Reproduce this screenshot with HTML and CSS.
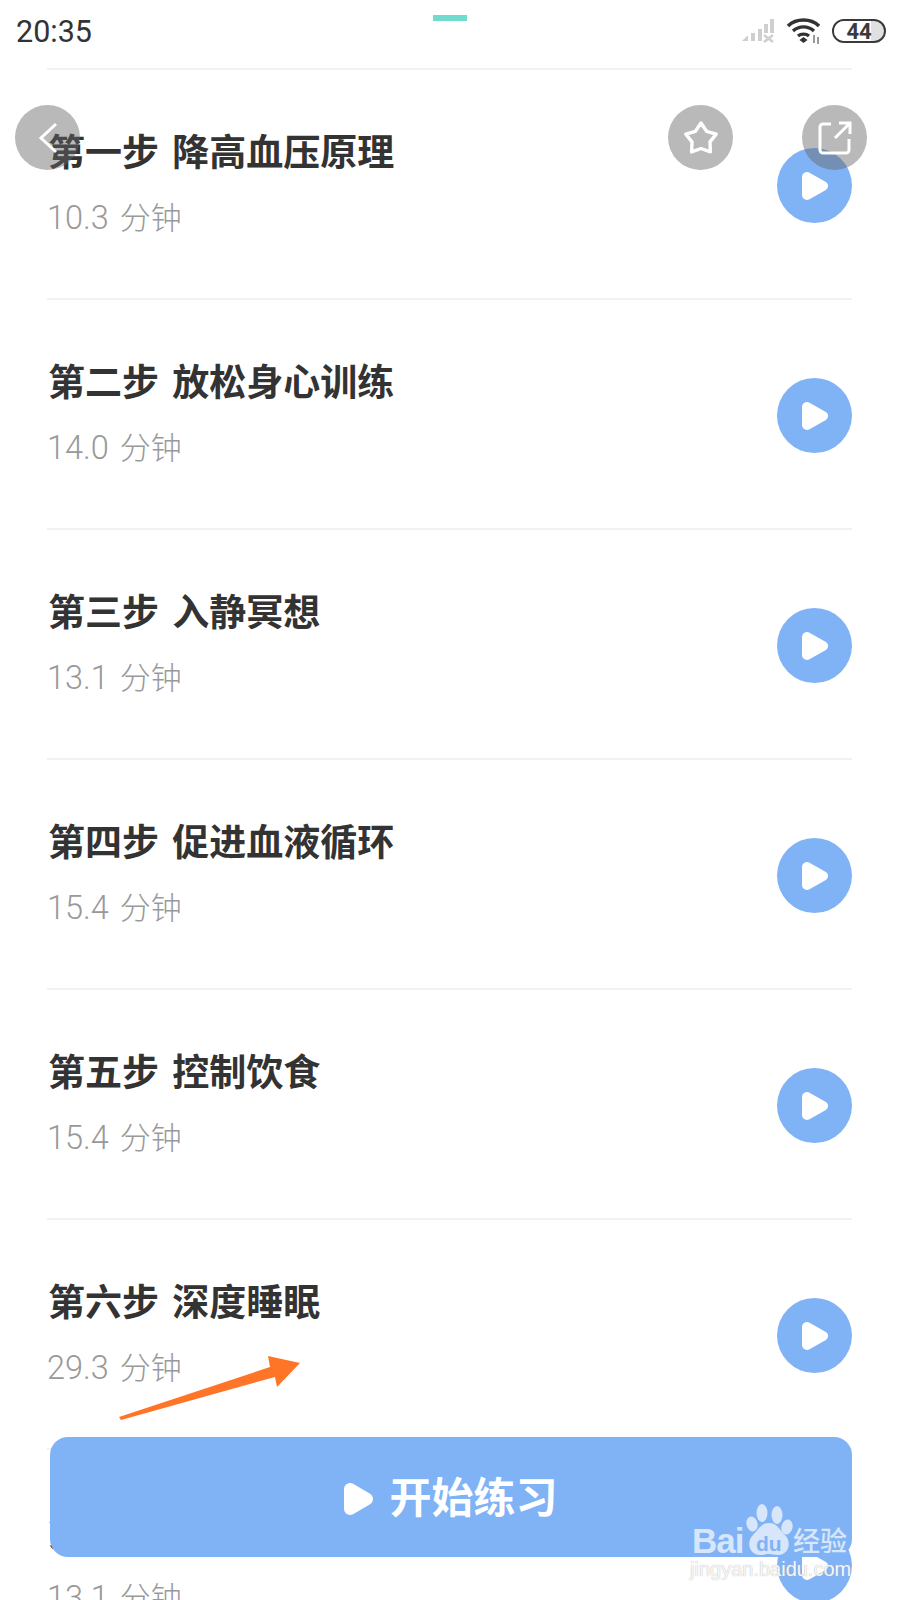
FILE: index.html
```html
<!DOCTYPE html>
<html lang="zh-CN">
<head>
    <meta charset="UTF-8">
    <title>降高血压</title>
    <link rel="stylesheet" href="styles.css">
</head>
<body>
<section class="wrap">
    <div class="statusBar">
        <span class="time">20:35</span>
        <span class="notch"></span>
        <div class="statusIcons">
            <svg class="signal" width="32" height="24" viewBox="0 0 32 24">
                <path d="M0 22l5-5h1v5zM9 14h4v8H9zM16 10h4v12h-4zM22 5h4v9h-4zM28 0h4v14h-4z" fill="#cfcfcf"/>
                <path d="M22 16l9 7M31 16l-9 7" stroke="#cfcfcf" stroke-width="2.500"/>
            </svg>
            <svg class="wifi" width="33" height="26" viewBox="0 0 33 26">
                <path d="M1 8C9 0 24 0 32 8M6 13c6-5.500 15-5.500 21 0M11 18c3-2.500 8-2.500 11 0" fill="none" stroke="#333" stroke-width="3.400"/>
                <path d="M16.500 19l4 3-4 3-4-3z" fill="#333"/>
                <path d="M27 17v8M31 19v7" stroke="#999" stroke-width="2"/>
            </svg>
            <div class="battery"><span class="batteryFill"></span><span class="batteryText">44</span></div>
        </div>
    </div>

    <ul class="steps">
        <li class="step">
            <div><h3>第一步 降高血压原理</h3><p>10.3 <span>分钟</span></p></div>
            <span class="playBtn"><svg width="26" height="28" viewBox="0 0 26 28"><path d="M5 5v18l16-9z" fill="#fff" stroke="#fff" stroke-width="10" stroke-linejoin="round"/></svg></span>
        </li>
        <li class="step">
            <div><h3>第二步 放松身心训练</h3><p>14.0 <span>分钟</span></p></div>
            <span class="playBtn"><svg width="26" height="28" viewBox="0 0 26 28"><path d="M5 5v18l16-9z" fill="#fff" stroke="#fff" stroke-width="10" stroke-linejoin="round"/></svg></span>
        </li>
        <li class="step">
            <div><h3>第三步 入静冥想</h3><p>13.1 <span>分钟</span></p></div>
            <span class="playBtn"><svg width="26" height="28" viewBox="0 0 26 28"><path d="M5 5v18l16-9z" fill="#fff" stroke="#fff" stroke-width="10" stroke-linejoin="round"/></svg></span>
        </li>
        <li class="step">
            <div><h3>第四步 促进血液循环</h3><p>15.4 <span>分钟</span></p></div>
            <span class="playBtn"><svg width="26" height="28" viewBox="0 0 26 28"><path d="M5 5v18l16-9z" fill="#fff" stroke="#fff" stroke-width="10" stroke-linejoin="round"/></svg></span>
        </li>
        <li class="step">
            <div><h3>第五步 控制饮食</h3><p>15.4 <span>分钟</span></p></div>
            <span class="playBtn"><svg width="26" height="28" viewBox="0 0 26 28"><path d="M5 5v18l16-9z" fill="#fff" stroke="#fff" stroke-width="10" stroke-linejoin="round"/></svg></span>
        </li>
        <li class="step">
            <div><h3>第六步 深度睡眠</h3><p>29.3 <span>分钟</span></p></div>
            <span class="playBtn"><svg width="26" height="28" viewBox="0 0 26 28"><path d="M5 5v18l16-9z" fill="#fff" stroke="#fff" stroke-width="10" stroke-linejoin="round"/></svg></span>
        </li>
        <li class="step">
            <div><h3>第七步 放松睡眠</h3><p>13.1 <span>分钟</span></p></div>
            <span class="playBtn"><svg width="26" height="28" viewBox="0 0 26 28"><path d="M5 5v18l16-9z" fill="#fff" stroke="#fff" stroke-width="10" stroke-linejoin="round"/></svg></span>
        </li>
    </ul>

    <!-- floating buttons over the list -->
    <span class="roundBtn backBtn">
        <svg width="20" height="32" viewBox="0 0 20 32"><path d="M18 2L3 16l15 14" fill="none" stroke="#fff" stroke-width="3"/></svg>
    </span>
    <span class="roundBtn starBtn">
        <svg width="36" height="36" viewBox="0 0 36 36"><path d="M18 3l5.600 8.300 9.600 2.800-6.200 7.800.4 10-9.400-3.400-9.400 3.400.4-10-6.200-7.800 9.600-2.800z" fill="none" stroke="#fff" stroke-width="3.400" stroke-linejoin="round"/></svg>
    </span>
    <span class="roundBtn shareBtn">
        <svg width="34" height="34" viewBox="0 0 34 34"><path d="M13 3H5a3 3 0 0 0-3 3v23a3 3 0 0 0 3 3h23a3 3 0 0 0 3-3V18M17 17L31 3M21 2h11v11" fill="none" stroke="#fff" stroke-width="3"/></svg>
    </span>

    <svg class="arrow" width="190" height="70" viewBox="0 0 190 70">
        <path d="M0 61L151 11 149 0l32 7-23 24-2-10L2 64z" fill="#ff7527"/>
    </svg>

    <button class="startBtn" type="button">
        <svg width="29" height="32" viewBox="0 0 29 32"><path d="M6 6v20l17-10z" fill="#fff" stroke="#fff" stroke-width="12" stroke-linejoin="round"/></svg>
        <span>开始练习</span>
    </button>

    <div class="watermark">
        <div class="wmLogo">
            <span class="wmBai">Bai</span>
            <svg class="wmPaw" width="48" height="53" viewBox="0 0 48 53">
                <ellipse cx="17" cy="10" rx="5.500" ry="9"/>
                <ellipse cx="32" cy="12" rx="5.500" ry="9"/>
                <ellipse cx="7" cy="21" rx="5.500" ry="7.500" transform="rotate(-15 7 21)"/>
                <ellipse cx="42" cy="24" rx="5.500" ry="7.500" transform="rotate(15 42 24)"/>
                <path d="M24 20c8 0 10 6 16 12 7 7 4 20-7 20-4 0-6-1-9-1s-5 1-9 1C4 52 1 39 8 32c6-6 8-12 16-12z"/>
            </svg>
            <span class="wmDu">du</span>
            <span class="wmCn">经验</span>
        </div>
        <div class="wmUrl">jingyan.baidu.com</div>
    </div>
</section>
</body>
</html>
```

FILE: styles.css
```css
html,body{
    margin:0;
    padding:0;
}
body{
    font-family:"Roboto","Noto Sans CJK SC",sans-serif;
    background-color:#fff;
}
.wrap{
    position:relative;
    width:900px;
    height:1600px;
    overflow:hidden;
}
.statusBar{
    height:68px;
    padding:0 14px 6px 16px;
    display:flex;
    align-items:center;
    justify-content:space-between;
    box-sizing:border-box;
}
.time{
    font-size:30.5px;
    color:#333;
}
.notch{
    position:absolute;
    left:433px;
    top:15px;
    width:34px;
    height:6px;
    background-color:#6fdccd;
}
.statusIcons{
    display:flex;
    align-items:center;
    gap:12px;
}
.signal{
    margin-right:1px;
}
.battery{
    position:relative;
    width:50px;
    height:20px;
    border:2.5px solid #3a3a3a;
    border-radius:13px;
    overflow:hidden;
    text-align:center;
    background-color:#e0e0e0;
}
.batteryFill{
    position:absolute;
    left:0;
    top:0;
    bottom:0;
    width:74%;
    background-color:#fff;
}
.batteryText{
    position:relative;
    font-size:22px;
    line-height:21px;
    font-weight:700;
    color:#3a3a3a;
    display:block;
}
.steps{
    list-style:none;
    margin:0 48px 0 47px;
    padding:0;
    border-top:2px solid #f2f2f2;
}
.step{
    box-sizing:border-box;
    height:230px;
    padding-top:3px;
    border-bottom:2px solid #f2f2f2;
    display:flex;
    align-items:center;
    justify-content:space-between;
}
.step h3{
    margin:0;
    padding-left:1px;
    font-size:37px;
    line-height:50px;
    font-weight:700;
    color:#333;
    word-spacing:4px;
}
.step p{
    margin:15px 0 0;
    font-size:32.5px;
    line-height:48px;
    font-weight:300;
    color:#999;
    word-spacing:3px;
}
.step p span{
    font-size:31px;
}
.playBtn{
    width:75px;
    height:75px;
    border-radius:50%;
    background-color:#80b3f6;
    display:flex;
    align-items:center;
    justify-content:center;
}
.roundBtn{
    position:absolute;
    top:105px;
    width:65px;
    height:65px;
    border-radius:50%;
    background-color:rgba(100,100,100,.45);
    display:flex;
    align-items:center;
    justify-content:center;
}
.backBtn{
    left:15px;
}
.starBtn{
    left:668px;
}
.shareBtn{
    left:802px;
}
.arrow{
    position:absolute;
    left:119px;
    top:1356px;
}
.startBtn{
    position:absolute;
    left:50px;
    top:1437px;
    width:802px;
    height:120px;
    border:0;
    border-radius:18px;
    background-color:#80b3f6;
    color:#fff;
    font-family:"Noto Sans CJK SC",sans-serif;
    font-size:42px;
    font-weight:700;
    display:flex;
    align-items:center;
    justify-content:center;
    gap:16px;
}
.startBtn svg{
    margin-top:4px;
}
.startBtn span{
    margin-bottom:6px;
}
.watermark{
    position:absolute;
    left:690px;
    top:1503px;
    width:180px;
    color:#d8e6fb;
}
.wmLogo{
    position:relative;
    height:53px;
}
.wmBai{
    position:absolute;
    left:2px;
    top:18px;
    font-family:"Liberation Sans",sans-serif;
    font-size:35px;
    line-height:40px;
    font-weight:700;
    letter-spacing:-1px;
}
.wmPaw{
    position:absolute;
    left:55px;
    top:0;
    fill:#d8e6fb;
}
.wmDu{
    position:absolute;
    left:66px;
    top:29px;
    font-family:"Liberation Sans",sans-serif;
    font-size:21px;
    line-height:24px;
    font-weight:700;
    color:#80b3f6;
}
.wmCn{
    position:absolute;
    left:103px;
    top:20px;
    font-family:"Noto Sans CJK SC",sans-serif;
    font-size:27px;
    line-height:34px;
    font-weight:500;
}
.wmUrl{
    font-family:"Liberation Sans",sans-serif;
    font-size:20px;
    line-height:26px;
    color:#f6f6f6;
    text-shadow:0 0 1px #aaa;
    white-space:nowrap;
}
```
